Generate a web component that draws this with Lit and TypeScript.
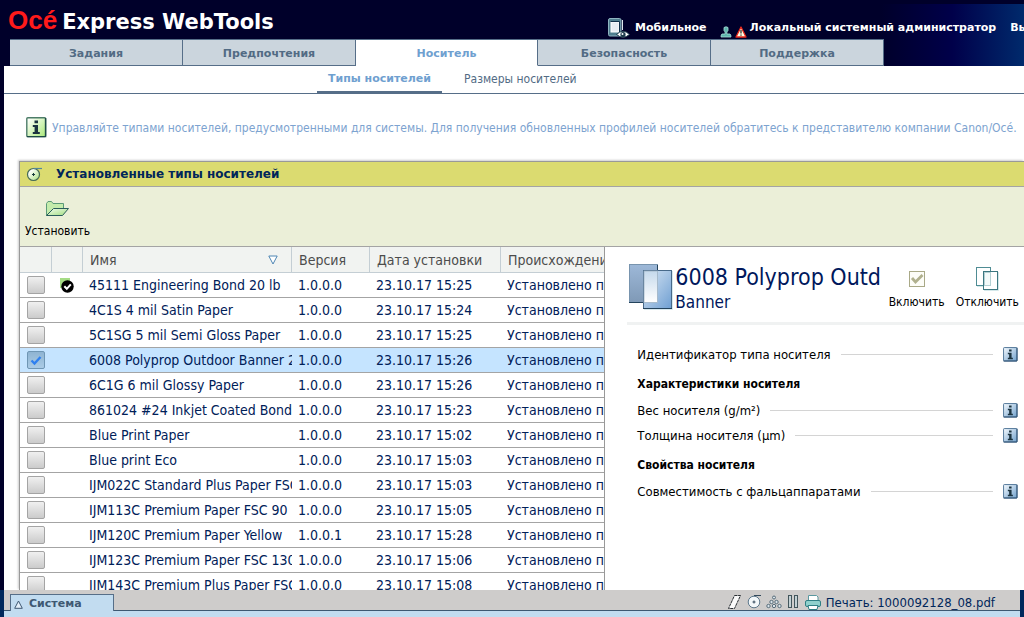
import { LitElement, html, css, svg } from "lit";
import { customElement, property, state } from "lit/decorators.js";
import { classMap } from "lit/directives/class-map.js";

interface Media {
  name: string;
  version: string;
  date: string;
  isDefault?: boolean;
}

const MEDIA: Media[] = [
  { name: "45111 Engineering Bond 20 lb", version: "1.0.0.0", date: "23.10.17 15:25", isDefault: true },
  { name: "4C1S 4 mil Satin Paper", version: "1.0.0.0", date: "23.10.17 15:24" },
  { name: "5C1SG 5 mil Semi Gloss Paper", version: "1.0.0.0", date: "23.10.17 15:25" },
  { name: "6008 Polyprop Outdoor Banner 2", version: "1.0.0.0", date: "23.10.17 15:26" },
  { name: "6C1G 6 mil Glossy Paper", version: "1.0.0.0", date: "23.10.17 15:26" },
  { name: "861024 #24 Inkjet Coated Bond", version: "1.0.0.0", date: "23.10.17 15:23" },
  { name: "Blue Print Paper", version: "1.0.0.0", date: "23.10.17 15:02" },
  { name: "Blue print Eco", version: "1.0.0.0", date: "23.10.17 15:03" },
  { name: "IJM022C Standard Plus Paper FSC", version: "1.0.0.0", date: "23.10.17 15:03" },
  { name: "IJM113C Premium Paper FSC 90", version: "1.0.0.0", date: "23.10.17 15:05" },
  { name: "IJM120C Premium Paper Yellow", version: "1.0.0.1", date: "23.10.17 15:28" },
  { name: "IJM123C Premium Paper FSC 130", version: "1.0.0.0", date: "23.10.17 15:06" },
  { name: "IJM143C Premium Plus Paper FSC", version: "1.0.0.0", date: "23.10.17 15:08" },
];

const mobileIcon = svg`<svg width="24" height="22" viewBox="0 0 24 22" aria-hidden="true">
  <rect x=".5" y="1.500" width="12.500" height="17.500" rx="1.500" fill="#4f7f8f" stroke="#8fb4c0"/>
  <path d="M14.500 3V13" stroke="#dfe9ee"/>
  <rect x="3" y="5" width="8" height="10" fill="#e8eef4" stroke="#fff"/>
  <path d="M2.500 4.500H11.500V15" fill="none" stroke="#10304a"/>
  <path d="M8.500 17.500Q15 11 21.500 17.500Q15 23 8.500 17.500Z" fill="#fff" stroke="#1c3d4d"/>
  <circle cx="15" cy="17.500" r="2.600" fill="#1c3d4d"/><circle cx="14.500" cy="17" r="1" fill="#fff"/>
</svg>`;

const userIcon = svg`<svg width="12" height="12" viewBox="0 0 12 12" aria-hidden="true">
  <path d="M4 1.500Q6 0 8 1.500V4.500L6.900 6V8H10Q11 8.500 11 11H1Q1 8.500 2 8H5.100V6L4 4.500Z" fill="#5cb4ac" stroke="#a9e0da" stroke-width=".8"/>
</svg>`;

const warnIcon = svg`<svg width="12" height="12" viewBox="0 0 12 12" aria-hidden="true">
  <path d="M6 1L11 11H1Z" fill="#fffbe0" stroke="#e8281c" stroke-width="1.300" stroke-linejoin="round"/>
  <path d="M6 4V7.500M6 8.500V9.700" stroke="#222" stroke-width="1.200"/>
</svg>`;

const mediaIcon = svg`<svg width="16" height="16" viewBox="0 0 16 16" aria-hidden="true">
  <defs><linearGradient id="roll" x1="0" y1="0" x2="1" y2="1"><stop offset=".2" stop-color="#fff"/><stop offset="1" stop-color="#a8e07c"/></linearGradient></defs>
  <circle cx="7.500" cy="8.500" r="6" fill="url(#roll)" stroke="#456b56" stroke-width="1.200"/>
  <path d="M7.500 2.500H16" stroke="#56889a" stroke-width="1.200"/>
  <path d="M6 8.500H9M7.500 7V10" stroke="#163a3a"/>
</svg>`;

const folderIcon = svg`<svg width="25" height="18" viewBox="0 0 25 18" aria-hidden="true">
  <defs><linearGradient id="fold" x1="0" y1="0" x2="1" y2="1"><stop offset="0" stop-color="#f4fdf0"/><stop offset="1" stop-color="#9fdc7c"/></linearGradient></defs>
  <path d="M1.500 15.500V3.500L3 1.500H6.500L8 3.500H18.500V9" fill="#c4ecac" stroke="#5b9a78"/>
  <path d="M1.500 15.500L8.500 8.500H23.500L17.500 15.500Z" fill="url(#fold)" stroke="#2a5c5c" stroke-linejoin="round"/>
</svg>`;

const defaultIcon = svg`<svg width="16" height="16" viewBox="0 0 16 16" aria-hidden="true">
  <rect x="2" y="1" width="10" height="10" fill="#a5dc85"/>
  <circle cx="9.500" cy="9.500" r="6.200" fill="#000"/>
  <path d="M6.300 9.300L8.800 11.800L12.800 7.300" fill="none" stroke="#fff" stroke-width="2"/>
</svg>`;

const sheetsIcon = svg`<svg width="46" height="48" viewBox="0 0 46 48" aria-hidden="true">
  <defs>
    <linearGradient id="back" x1="0" y1="0" x2="0" y2="1"><stop offset="0" stop-color="#9db8d8"/><stop offset="1" stop-color="#7f99b6"/></linearGradient>
    <linearGradient id="front" x1="0" y1="0" x2="1" y2="1"><stop offset="0" stop-color="#dbe8f5"/><stop offset="1" stop-color="#6f9fd2"/></linearGradient>
    <linearGradient id="mix" x1="0" y1="0" x2="0" y2="1"><stop offset="0" stop-color="#c5d9ec"/><stop offset="1" stop-color="#fff"/></linearGradient>
  </defs>
  <path d="M15 46.500H43.500V8" fill="none" stroke="#d7e8ee"/>
  <rect x=".5" y="1.500" width="28" height="38" fill="url(#back)" stroke="#7894ae"/>
  <path d="M0 39.500H15M28.500 2V8" stroke="#24435c"/>
  <rect x="14.500" y="7.500" width="28" height="38" fill="url(#front)" stroke="#47698a"/>
  <rect x="15" y="8" width="13.500" height="31.500" fill="url(#mix)" stroke="#9eb2c4" stroke-width=".8"/>
  <path d="M14 45.500H43" stroke="#24435c"/>
</svg>`;

const enableIcon = svg`<svg width="26" height="26" viewBox="0 0 26 26" aria-hidden="true">
  <rect x="5.500" y="5.500" width="15" height="15" fill="#fdfdf8" stroke="#a9a987"/>
  <path d="M8 12L11.500 16L18.500 9" fill="none" stroke="#b0b08e" stroke-width="2.800"/>
</svg>`;

const disableIcon = svg`<svg width="26" height="26" viewBox="0 0 26 26" aria-hidden="true">
  <path d="M3 20.500H9M10 24.500H24.500V6" fill="none" stroke="#d4e8ea"/>
  <rect x="2.500" y="1.500" width="14" height="18" fill="#fff" stroke="#4f8c94"/>
  <rect x="9.500" y="5.500" width="14" height="18" fill="#fff" stroke="#3c7680"/>
  <rect x="10.500" y="6.500" width="6" height="13" fill="#f4fafa" stroke="#b4d0d4"/>
</svg>`;

const statusIcons = svg`<svg width="94" height="18" viewBox="0 0 94 18" aria-hidden="true">
  <path d="M7.500 2.500H13.500L7.500 15.500H1.500Z" fill="#fafafa" stroke="#2a2f34" stroke-dasharray="3 .6"/>
  <circle cx="27" cy="9" r="5.800" fill="#f2f7fa" stroke="#5d788c"/>
  <path d="M27 2.500H34M25.500 9H28.500M27 7.500V10.500" stroke="#33495c"/>
  <g fill="#dbe5ec" stroke="#49606e" stroke-width=".9">
    <circle cx="47" cy="4.500" r="1.500"/><circle cx="44.500" cy="9" r="1.700"/><circle cx="49.500" cy="9" r="1.700"/>
    <circle cx="41.500" cy="13" r="1.700"/><circle cx="47" cy="13" r="1.700"/><circle cx="52.500" cy="13" r="1.700"/>
  </g>
  <rect x="61.500" y="2.500" width="3" height="12" fill="#c3d0d4" stroke="#42555b"/>
  <rect x="67.500" y="2.500" width="3" height="12" fill="#c3d0d4" stroke="#42555b"/>
  <path d="M81.500 8V2.500H89.500L91 4V8" fill="#fff" stroke="#5a98a0"/>
  <rect x="78.500" y="7.500" width="15" height="6" rx="1.500" fill="#8fd0cc" stroke="#2f7f84"/>
  <path d="M81 12.500H91L90 16.500H82Z" fill="#fff" stroke="#2f7f84"/>
</svg>`;

@customElement("info-glyph")
class InfoGlyph extends LitElement {
  @property({ type: Boolean, reflect: true }) large = false;

  static styles = css`
    :host { display: inline-flex; flex: none; }
    svg { display: block; width: 15px; height: 15px; }
    :host([large]) svg { width: 21px; height: 21px; }
  `;

  render() {
    return html`<svg viewBox="0 0 21 21" aria-hidden="true">
      <defs><linearGradient id="g" x1="0" y1="0" x2="1" y2="1">
        <stop offset=".1" stop-color=${this.large ? "#fbfff8" : "#e9f2fa"} />
        <stop offset="1" stop-color=${this.large ? "#a9e878" : "#6fa0cc"} />
      </linearGradient></defs>
      <rect x=".8" y=".8" width="18.800" height="18.800" rx="1" fill="url(#g)" stroke=${this.large ? "#4d7d68" : "#55799a"} stroke-width="1.400" />
      <path d="M.8 19.600H19.600V1" fill="none" stroke=${this.large ? "#1d4a46" : "#2d4f70"} stroke-width="1.400" />
      <path d="M8.500 3.500H12V6.200H8.500ZM6.800 8H12V15H13.800V17H6.800V15H8.600V10H6.800Z" fill="#1c3440" />
    </svg>`;
  }
}

@customElement("media-table")
class MediaTable extends LitElement {
  @state() private selected = 3;

  static styles = css`
    :host { display: block; overflow: hidden; border-right: 1px solid #999; }
    table { width: 700px; table-layout: fixed; border-collapse: separate; border-spacing: 0; color: #002058; font-size: 14px; }
    .pick { width: 32px; }
    .flag { width: 31px; }
    .name { width: 209px; }
    .version { width: 78px; }
    .date { width: 131px; }
    th, td { height: 24px; padding: 0 0 0 6px; text-align: left; white-space: nowrap; overflow: hidden; line-height: 24px; border-bottom: 1px solid #a4a4a4; }
    th { height: 25px; padding-left: 7px; font-weight: normal; color: #4c4c4c; background: #f1f3f1; border-right: 1px solid #c4ced4; border-color: #c4ced4; }
    .sortable { display: flex; align-items: center; justify-content: space-between; padding-right: 13px; }
    .selected td { background: #c5e4ff; }
    svg { display: block; }
    input { appearance: none; display: block; box-sizing: border-box; width: 18px; height: 18px; margin: 0 0 0 1px; border: 1px solid #a4a4a4; border-radius: 2px; background: linear-gradient(#f0f0f0, #cbcbcb); }
    input:checked { border-color: #6f96b4; background: url("data:image/svg+xml,%3Csvg xmlns='http://www.w3.org/2000/svg' viewBox='0 0 16 16'%3E%3Cpath d='M3.500 8.500L6.500 11.500L12.500 5' fill='none' stroke='%232f80f0' stroke-width='2.400'/%3E%3C/svg%3E"), linear-gradient(#8fb4d2, #aacbe6); }
  `;

  render() {
    return html`<table>
      <colgroup><col class="pick" /><col class="flag" /><col class="name" /><col class="version" /><col class="date" /><col /></colgroup>
      <thead><tr>
        <th scope="col"></th><th scope="col"></th>
        <th scope="col"><span class="sortable">Имя
          <svg width="10" height="10" viewBox="0 0 10 10" aria-hidden="true"><path d="M.8 1H9.200L5 9Z" fill="#fff" stroke="#4f86b4" /></svg></span></th>
        <th scope="col">Версия</th><th scope="col">Дата установки</th><th scope="col">Происхождение</th>
      </tr></thead>
      <tbody>
        ${MEDIA.map((m, i) => html`<tr class=${classMap({ selected: i === this.selected })}>
          <td><input type="checkbox" aria-label=${m.name} .checked=${i === this.selected} @change=${() => (this.selected = i)} /></td>
          <td>${m.isDefault ? defaultIcon : ""}</td>
          <td>${m.name}</td><td>${m.version}</td><td>${m.date}</td><td>Установлено производителем</td>
        </tr>`)}
      </tbody>
    </table>`;
  }
}

@customElement("media-details")
class MediaDetails extends LitElement {
  static styles = css`
    :host { display: block; overflow: hidden; padding: 16px 0 0 22px; color: #000; font-size: 13px; }
    header { display: flex; align-items: flex-start; height: 59px; padding-left: 2px; border-bottom: 3px solid #f0f2f2; }
    header > svg { flex: none; }
    .title { flex: 1; min-width: 0; overflow: hidden; white-space: nowrap; color: #00185c; }
    h2 { margin: 0; font-weight: normal; font-size: 23px; line-height: 28px; overflow: hidden; }
    p { margin: 0; font-size: 17px; line-height: 22px; }
    button { display: flex; flex-direction: column; align-items: center; gap: 2px; padding: 3px 0 0; border: 0; background: none; font: inherit; font-size: 12px; line-height: 16px; color: #000; }
    .actions { display: flex; flex: none; gap: 11px; padding: 0 5px 0 4px; }
    .body { padding: 17px 6px 0 10px; }
    h3 { margin: 0; font-size: 12px; height: 31px; line-height: 35px; }
    .row { display: flex; align-items: center; height: 25px; gap: 10px; }
    .row::after { content: ""; order: 1; flex: 1; height: 1px; background: #d4d4d4; }
    .row info-glyph { order: 2; }
  `;

  private row(label: string) {
    return html`<div class="row"><span>${label}</span><info-glyph></info-glyph></div>`;
  }

  render() {
    return html`<header>
        ${sheetsIcon}
        <div class="title"><h2>6008 Polyprop Outd</h2><p>Banner</p></div>
        <div class="actions">
          <button type="button">${enableIcon}Включить</button>
          <button type="button">${disableIcon}Отключить</button>
        </div>
      </header>
      <div class="body">
        ${this.row("Идентификатор типа носителя")}
        <h3>Характеристики носителя</h3>
        ${this.row("Вес носителя (g/m²)")} ${this.row("Толщина носителя (µm)")}
        <h3>Свойства носителя</h3>
        ${this.row("Совместимость с фальцаппаратами")}
      </div>`;
  }
}

@customElement("app-root")
class AppRoot extends LitElement {
  static styles = css`
    :host { display: flex; flex-direction: column; height: 100vh; overflow: hidden; background: #fff; font-family: "DejaVu Sans Condensed", "DejaVu Sans", sans-serif; }
    a { color: inherit; text-decoration: none; }
    svg { display: block; flex: none; }
    .top { flex: none; display: flex; flex-direction: column; height: 66px; overflow: hidden; font-family: "DejaVu Sans", sans-serif; background: linear-gradient(90deg, #00002a 86%, #00004a 93%, #002a6c 100%) 0 4px no-repeat #00002a; }
    .brand { display: flex; align-items: center; height: 39px; padding-left: 8px; }
    h1 { display: flex; align-items: baseline; gap: 5px; flex: 1; margin: 3px 0 0; font-size: 21px; line-height: 30px; color: #fff; white-space: nowrap; }
    .oce { color: #ff1a1a; font-family: "Liberation Sans", sans-serif; font-size: 26px; }
    .account { display: flex; align-items: center; flex: none; padding-top: 16px; width: 416px; white-space: nowrap; overflow: hidden; color: #fff; font-weight: bold; font-size: 11px; line-height: 22px; }
    .account a { display: flex; align-items: center; gap: 3px; margin-right: 13px; }
    .account .user svg { padding-top: 8px; }
    .account .user { margin-right: 14px; }
    .tabs { display: flex; padding-left: 10px; font-weight: bold; font-size: 11px; color: #526b84; }
    .tabs a { box-sizing: border-box; width: 173px; height: 27px; padding-top: 1px; line-height: 25px; text-align: center; background: #cbd5dd; border: 1px solid #566e88; border-left-width: 0; }
    .tabs .active { width: 182px; color: #6fa0d0; background: #fff; border-bottom-color: #fff; }
    .page { flex: 1; min-height: 0; display: flex; flex-direction: column; border-left: 4px solid #00002a; }
    .sub { flex: none; display: flex; height: 27px; padding-left: 313px; border-bottom: 1px solid #566e88; font-size: 12px; line-height: 26px; color: #526b84; }
    .sub a { padding: 0 11px; height: 25px; }
    .sub .active { font-family: "DejaVu Sans", sans-serif; font-size: 11px; font-weight: bold; color: #6fa0d0; border-bottom: 3px solid #566e88; margin-right: 11px; }
    .hint { flex: none; display: flex; align-items: center; gap: 5px; height: 67px; padding-left: 22px; font-size: 12px; line-height: 16px; color: #7da3d0; white-space: nowrap; }
    .panel { flex: 1; min-height: 0; display: flex; flex-direction: column; margin-left: 15px; border: solid #999; border-width: 1px 0 0 1px; box-shadow: -1px -1px 2px #ccc; }
    .panel h2 { flex: none; display: flex; align-items: center; gap: 14px; height: 24px; margin: 0; padding-left: 6px; background: #dbdb70; border-bottom: 1px solid #a4a4a4; font-size: 12px; line-height: 22px; color: #00265a; font-family: "DejaVu Sans", sans-serif; }
    .toolbar { flex: none; height: 59px; padding-left: 5px; display: flex; align-items: center; background: #ebefd8; border-bottom: 1px solid #a4a4a4; }
    .toolbar button { display: flex; flex-direction: column; align-items: center; gap: 5px; padding: 5px 0 0; border: 0; background: none; color: #000; font: inherit; font-size: 12px; line-height: 16px; }
    .split { flex: 1; min-height: 0; display: grid; grid-template-columns: minmax(0, 583fr) minmax(0, 417fr); grid-template-rows: minmax(0, 1fr); }
    .footer { flex: none; border: solid #00285c; border-width: 0 4px; height: 27px; background: linear-gradient(#cecccb 20px, #3e5872 20px 21px, #c2dcf0 21px); display: flex; align-items: flex-start; justify-content: space-between; padding: 0 25px 0 6px; color: #00265a; }
    .system { box-sizing: border-box; width: 104px; height: 17px; margin-top: 4px; padding: 2px 0 0 3px; display: flex; align-items: center; gap: 6px; background: #c2dcf0; border: 1px solid #566e88; border-bottom: 0; font: bold 11px/16px "DejaVu Sans", sans-serif; color: #3e5872; }
    .job { display: flex; align-items: center; gap: 5px; height: 24px; font-size: 13px; line-height: 20px; }
    .job span { padding-top: 2px; }
  `;

  render() {
    return html`
      <header class="top">
        <div class="brand">
          <h1><span class="oce">Océ</span><span>Express WebTools</span></h1>
          <div class="account">
            <a href="#">${mobileIcon}Мобильное</a>
            <a href="#" class="user">${userIcon}${warnIcon}Локальный системный администратор</a>
            <a href="#">Выход</a>
          </div>
        </div>
        <nav class="tabs">
          <a href="#">Задания</a><a href="#">Предпочтения</a><a href="#" class="active">Носитель</a><a href="#">Безопасность</a><a href="#">Поддержка</a>
        </nav>
      </header>
      <main class="page">
        <nav class="sub"><a href="#" class="active">Типы носителей</a><a href="#">Размеры носителей</a></nav>
        <div class="hint"><info-glyph large></info-glyph>Управляйте типами носителей, предусмотренными для системы. Для получения обновленных профилей носителей обратитесь к представителю компании Canon/Océ.</div>
        <section class="panel">
          <h2>${mediaIcon}Установленные типы носителей</h2>
          <div class="toolbar"><button type="button">${folderIcon}Установить</button></div>
          <div class="split"><media-table></media-table><media-details></media-details></div>
        </section>
      </main>
      <footer class="footer">
        <a href="#" class="system"><svg width="9" height="9" viewBox="0 0 9 9" aria-hidden="true"><path d="M4.500 1L8.300 8.300H.7Z" fill="#e4f0fa" stroke="#3e5872" /></svg>Система</a>
        <div class="job">${statusIcons}<span>Печать: 1000092128_08.pdf</span></div>
      </footer>`;
  }
}
